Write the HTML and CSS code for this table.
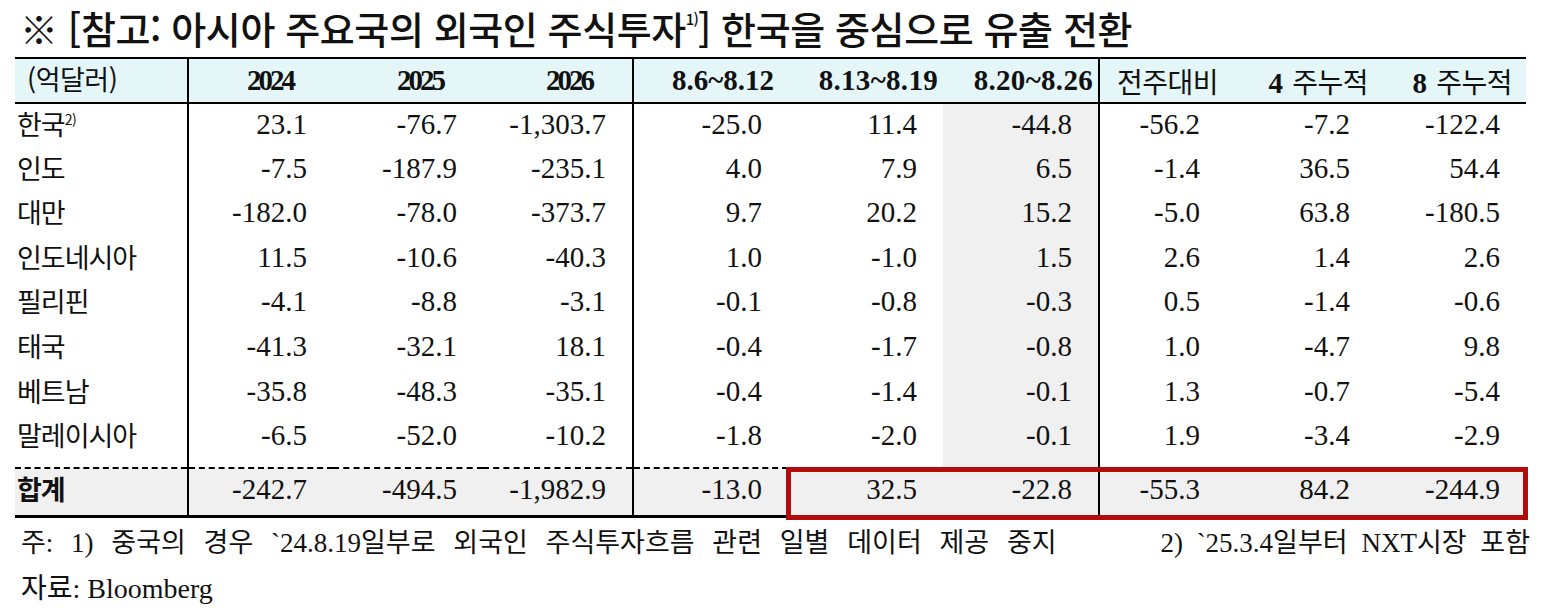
FILE: index.html
```html
<!DOCTYPE html>
<html lang="ko">
<head>
<meta charset="utf-8">
<title>아시아 주요국의 외국인 주식투자</title>
<link rel="stylesheet" href="styles.css">
</head>
<body>
<div class="page">
  <h1 class="title">※ [참고: 아시아 주요국의 외국인 주식투자<sup class="tsup">1)</sup>] 한국을 중심으로 유출 전환</h1>
  <div class="table-wrap">
    <table class="flow">
      <colgroup>
        <col class="c-lbl"><col class="c-y1"><col class="c-y"><col class="c-y">
        <col class="c-w"><col class="c-w"><col class="c-w2">
        <col class="c-d"><col class="c-y"><col class="c-y">
      </colgroup>
      <thead>
        <tr class="head">
          <th class="lbl">(억달러)</th>
          <th class="yr">2024</th>
          <th class="yr">2025</th>
          <th class="yr">2026</th>
          <th class="wk">8.6~8.12</th>
          <th class="wk">8.13~8.19</th>
          <th class="wk">8.20~8.26</th>
          <th class="ko">전주대비</th>
          <th><b class="num">4</b> <span class="ko">주누적</span></th>
          <th><b class="num">8</b> <span class="ko">주누적</span></th>
        </tr>
      </thead>
      <tbody>
        <tr><td class="lbl">한국<sup class="rsup">2)</sup></td><td>23.1</td><td>-76.7</td><td>-1,303.7</td><td>-25.0</td><td>11.4</td><td class="shade">-44.8</td><td>-56.2</td><td>-7.2</td><td>-122.4</td></tr>
        <tr><td class="lbl">인도</td><td>-7.5</td><td>-187.9</td><td>-235.1</td><td>4.0</td><td>7.9</td><td class="shade">6.5</td><td>-1.4</td><td>36.5</td><td>54.4</td></tr>
        <tr><td class="lbl">대만</td><td>-182.0</td><td>-78.0</td><td>-373.7</td><td>9.7</td><td>20.2</td><td class="shade">15.2</td><td>-5.0</td><td>63.8</td><td>-180.5</td></tr>
        <tr><td class="lbl">인도네시아</td><td>11.5</td><td>-10.6</td><td>-40.3</td><td>1.0</td><td>-1.0</td><td class="shade">1.5</td><td>2.6</td><td>1.4</td><td>2.6</td></tr>
        <tr><td class="lbl">필리핀</td><td>-4.1</td><td>-8.8</td><td>-3.1</td><td>-0.1</td><td>-0.8</td><td class="shade">-0.3</td><td>0.5</td><td>-1.4</td><td>-0.6</td></tr>
        <tr><td class="lbl">태국</td><td>-41.3</td><td>-32.1</td><td>18.1</td><td>-0.4</td><td>-1.7</td><td class="shade">-0.8</td><td>1.0</td><td>-4.7</td><td>9.8</td></tr>
        <tr><td class="lbl">베트남</td><td>-35.8</td><td>-48.3</td><td>-35.1</td><td>-0.4</td><td>-1.4</td><td class="shade">-0.1</td><td>1.3</td><td>-0.7</td><td>-5.4</td></tr>
        <tr class="last"><td class="lbl">말레이시아</td><td>-6.5</td><td>-52.0</td><td>-10.2</td><td>-1.8</td><td>-2.0</td><td class="shade">-0.1</td><td>1.9</td><td>-3.4</td><td>-2.9</td></tr>
        <tr class="total"><td class="lbl">합계</td><td>-242.7</td><td>-494.5</td><td>-1,982.9</td><td>-13.0</td><td>32.5</td><td>-22.8</td><td>-55.3</td><td>84.2</td><td>-244.9</td></tr>
      </tbody>
    </table>
    <div class="highlight"></div>
  </div>
  <div class="notes">
    <div class="note-row">
      <span class="note-main">주: 1) 중국의 경우 `24.8.19일부로 외국인 주식투자흐름 관련 일별 데이터 제공 중지</span>
      <span class="note-side">2) `25.3.4일부터 NXT시장 포함</span>
    </div>
    <div class="note-row">
      <span class="note-src">자료: Bloomberg</span>
    </div>
  </div>
</div>
</body>
</html>
```
FILE: styles.css
```css
html, body {
  margin: 0;
  padding: 0;
  background: #ffffff;
}

body {
  width: 1541px;
  height: 608px;
  overflow: hidden;
  color: #111111;
  font-family: "Liberation Serif", "Noto Sans CJK KR", serif;
}

.page {
  display: flex;
  flex-direction: column;
}

.title {
  margin: 0 0 2px 0;
  height: 55px;
  padding-left: 20px;
  box-sizing: border-box;
  font-family: "Noto Sans CJK KR", sans-serif;
  font-weight: 500;
  font-size: 38px;
  line-height: 55px;
  letter-spacing: -0.4px;
  color: #111;
  white-space: nowrap;
}

.tsup {
  font-family: "Noto Sans CJK KR", sans-serif;
  font-size: 15px;
  vertical-align: 19px;
  line-height: 0;
  letter-spacing: -1px;
}

.table-wrap {
  position: relative;
  margin-left: 15px;
  width: 1511px;
}

.flow {
  width: 1511px;
  table-layout: fixed;
  border-collapse: collapse;
  border-spacing: 0;
  font-size: 29px;
}

.c-lbl { width: 173px; }
.c-y1 { width: 145px; }
.c-y { width: 150px; }
.c-w { width: 155px; }
.c-w2 { width: 156px; }
.c-d { width: 127px; }

.flow th,
.flow td {
  padding: 0 26px 0 0;
  text-align: right;
  white-space: nowrap;
  overflow: visible;
}

.flow th:nth-child(1),
.flow td:nth-child(1),
.flow th:nth-child(4),
.flow td:nth-child(4),
.flow th:nth-child(7),
.flow td:nth-child(7) {
  border-right: 2px solid #000;
}

.head {
  height: 45px;
  background: #e4f6f8;
  border-top: 2px solid #000;
  border-bottom: 2px solid #000;
}

.head th {
  font-weight: 700;
  font-size: 29px;
  vertical-align: middle;
}

.head .yr {
  letter-spacing: -3px;
  padding-right: 40px;
}

.head th:nth-child(5) { padding-right: 14px; }
.head th:nth-child(6) { padding-right: 5px; letter-spacing: 0.3px; }
.head th:nth-child(7) { padding-right: 5px; letter-spacing: 0.3px; }
.head th:nth-child(8) { padding-right: 8px; }
.head th:nth-child(9) { padding-right: 8px; }
.head th:nth-child(10) { padding-right: 14px; }

.head .ko,
.head th.ko {
  font-family: "Noto Sans CJK KR", sans-serif;
  font-weight: 400;
  font-size: 28px;
  letter-spacing: -0.5px;
}

.head .num {
  font-weight: 700;
  margin-right: 2px;
}

.head th.lbl {
  text-align: left;
  padding: 0 0 4px 12px;
  font-family: "Noto Sans CJK KR", sans-serif;
  font-weight: 400;
  font-size: 27px;
  letter-spacing: -0.5px;
}

.flow tbody tr {
  height: 44.6px;
}

.flow tbody tr.last {
  height: 52.8px;
}

.flow td {
  vertical-align: top;
  line-height: 30px;
  padding-top: 5px;
}

.flow td.lbl {
  text-align: left;
  padding: 5px 0 0 2px;
  font-family: "Noto Sans CJK KR", sans-serif;
  font-size: 27px;
  letter-spacing: -1px;
}

.rsup {
  font-size: 14px;
  vertical-align: 10px;
  line-height: 0;
  letter-spacing: -0.5px;
}

.shade {
  background: #f0f0f0;
}

.flow tr.total {
  height: 49px;
  background: #f0f0f0;
  border-top: 2px dashed #000;
  border-bottom: 3px solid #000;
}

.flow tr.total td {
  padding-top: 5px;
}

.flow tr.total td.lbl {
  font-weight: 700;
  padding-top: 5px;
}

.highlight {
  position: absolute;
  left: 771px;
  top: 410px;
  width: 742px;
  height: 53px;
  box-sizing: border-box;
  border: 5px solid #b10d0d;
  pointer-events: none;
}

.notes {
  display: flex;
  flex-direction: column;
  padding: 0 11px 0 21px;
  font-size: 27px;
}

.note-row {
  display: flex;
  justify-content: space-between;
  align-items: center;
  height: 45px;
  white-space: nowrap;
}

.note-main {
  word-spacing: 11px;
}

.note-side {
  word-spacing: 7px;
}

.note-src {
  font-size: 28px;
}
```
